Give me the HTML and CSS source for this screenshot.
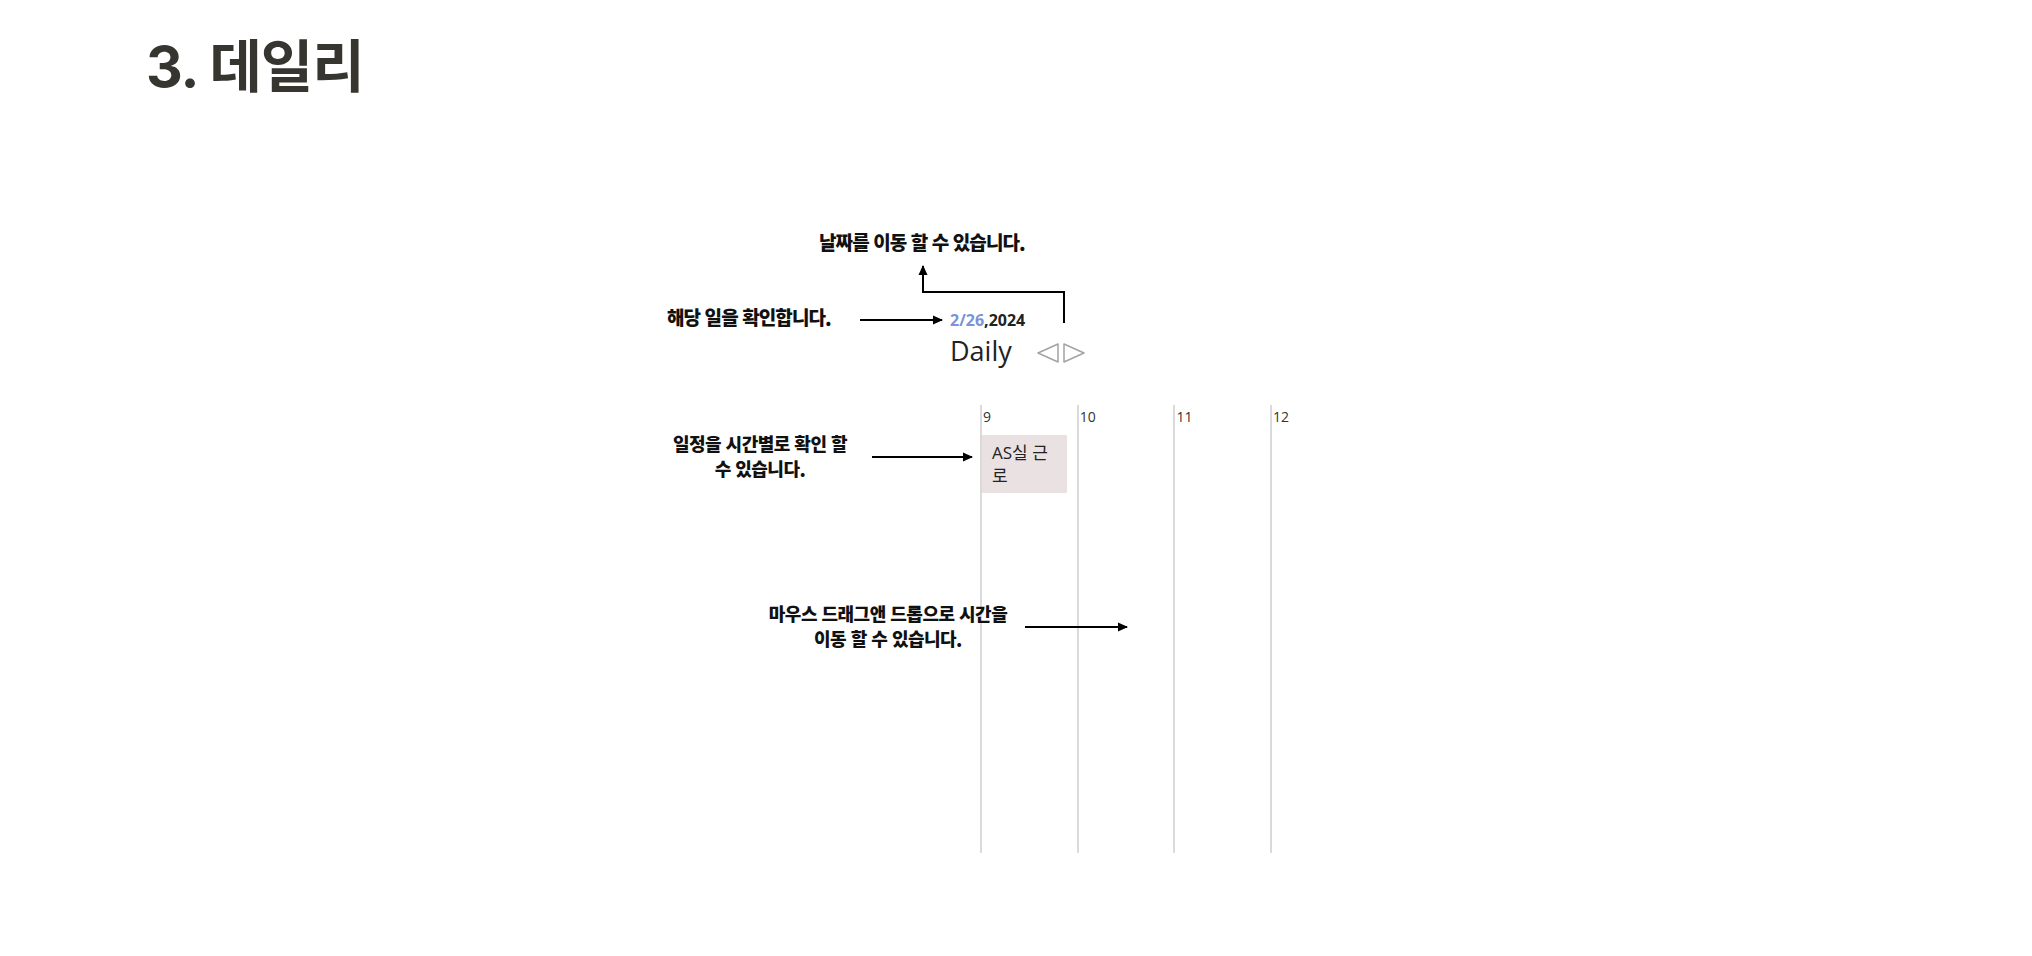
FILE: index.html
```html
<!DOCTYPE html>
<html lang="ko">
<head>
    <meta charset="UTF-8">
    <meta name="viewport" content="width=device-width, initial-scale=1.0">
    <title>3. 데일리</title>
    <link rel="stylesheet" href="styles.css">
</head>
<body>

    <main class="page">
        <h1 class="title">3. 데일리</h1>

        <figure class="shot">
            <!-- arrows of the annotations -->
            <svg class="arrows" width="660" height="680" viewBox="0 0 660 680">
                <defs>
                    <marker id="head" viewBox="0 0 10 10" refX="9" refY="5" markerWidth="10" markerHeight="10" markerUnits="userSpaceOnUse" orient="auto">
                        <path d="M0,0.5 L10,5 L0,9.5 Z" fill="#000"/>
                    </marker>
                </defs>
                <path d="M414,123 V92 H273 V66" fill="none" stroke="#000" stroke-width="2" marker-end="url(#head)"/>
                <path d="M210,120 H292" fill="none" stroke="#000" stroke-width="2" marker-end="url(#head)"/>
                <path d="M222,257 H322" fill="none" stroke="#000" stroke-width="2" marker-end="url(#head)"/>
                <path d="M375,427 H477" fill="none" stroke="#000" stroke-width="2" marker-end="url(#head)"/>
            </svg>

            <p class="note note-move">날짜를 이동 할 수 있습니다.</p>
            <p class="note note-day">해당 일을 확인합니다.</p>
            <p class="note note-time">일정을 시간별로 확인 할<br>수 있습니다.</p>
            <p class="note note-drag">마우스 드래그앤 드롭으로 시간을<br>이동 할 수 있습니다.</p>

            <div class="calendar">
                <div class="date"><span class="date-day">2/26</span>,2024</div>
                <div class="view-head">
                    <span class="view-name">Daily</span>
                    <span class="nav">
                        <svg width="24" height="22" viewBox="0 0 24 22"><path d="M22,2 L2,11 L22,20 Z" fill="none" stroke="#a3a3a3" stroke-width="1.5" stroke-linejoin="round"/></svg>
                        <svg width="24" height="22" viewBox="0 0 24 22"><path d="M2,2 L22,11 L2,20 Z" fill="none" stroke="#a3a3a3" stroke-width="1.5" stroke-linejoin="round"/></svg>
                    </span>
                </div>

                <div class="timeline">
                    <div class="hour">
                        <span class="hour-label">9</span>
                        <div class="event">AS실 근로</div>
                    </div>
                    <div class="hour"><span class="hour-label">10</span></div>
                    <div class="hour"><span class="hour-label">11</span></div>
                    <div class="hour"><span class="hour-label">12</span></div>
                </div>
            </div>
        </figure>
    </main>

</body>
</html>
```

FILE: styles.css
```css
* {
    margin: 0;
    padding: 0;
    box-sizing: border-box;
}

body {
    font-family: "Open Sans", "Noto Sans CJK KR", sans-serif;
    background-color: #fff;
    color: #222;
}

.page {
    padding: 33px 0 0 146px;
}

.title {
    font-family: Inter, "Noto Sans CJK KR", sans-serif;
    font-size: 57px;
    font-weight: 700;
    line-height: 68px;
    letter-spacing: -1px;
    color: #37352f;
}

/* the annotated screenshot */
.shot {
    position: relative;
    width: 660px;
    height: 680px;
    margin: 99px 0 0 504px;
}

.arrows {
    position: absolute;
    left: 0;
    top: 0;
    pointer-events: none;
}

.note {
    position: absolute;
    font-family: "Noto Sans CJK KR", sans-serif;
    font-weight: 900;
    color: #111;
    white-space: nowrap;
}

.note-move, .note-day {
    font-size: 19px;
    line-height: 26px;
    letter-spacing: -0.9px;
}

.note-move {
    left: 169px;
    top: 29px;
}

.note-day {
    left: 17px;
    top: 104px;
}

.note-time, .note-drag {
    font-size: 18px;
    line-height: 25px;
    letter-spacing: -0.5px;
    text-align: center;
}

.note-time {
    left: 0;
    top: 231px;
    width: 220px;
}

.note-drag {
    left: 88px;
    top: 401px;
    width: 300px;
}

/* calendar part */
.calendar {
    margin-left: 300px;
    padding-top: 109px;
}

.date {
    font-size: 16px;
    font-weight: 700;
    line-height: 22px;
    color: #222;
}

.date-day {
    color: #7b93d8;
}

.view-head {
    display: flex;
    align-items: center;
    gap: 24px;
    margin-top: 2px;
}

.view-name {
    font-size: 27px;
    line-height: 35px;
}

.nav {
    display: flex;
    gap: 2px;
    padding-top: 4px;
}

.timeline {
    display: grid;
    grid-template-columns: repeat(4, 96.7px);
    margin: 37px 0 0 30px;
}

.hour {
    height: 448px;
    border-left: 2px solid #dadada;
}

.hour-label {
    display: block;
    padding: 2px 0 0 1px;
    font-size: 14px;
    line-height: 19px;
    color: #333;
}

.event {
    width: 85px;
    height: 58px;
    margin-top: 9px;
    padding: 6px 10px 0 10px;
    background-color: #e9e1e2;
    font-size: 17px;
    line-height: 23px;
    color: #222;
}
```
